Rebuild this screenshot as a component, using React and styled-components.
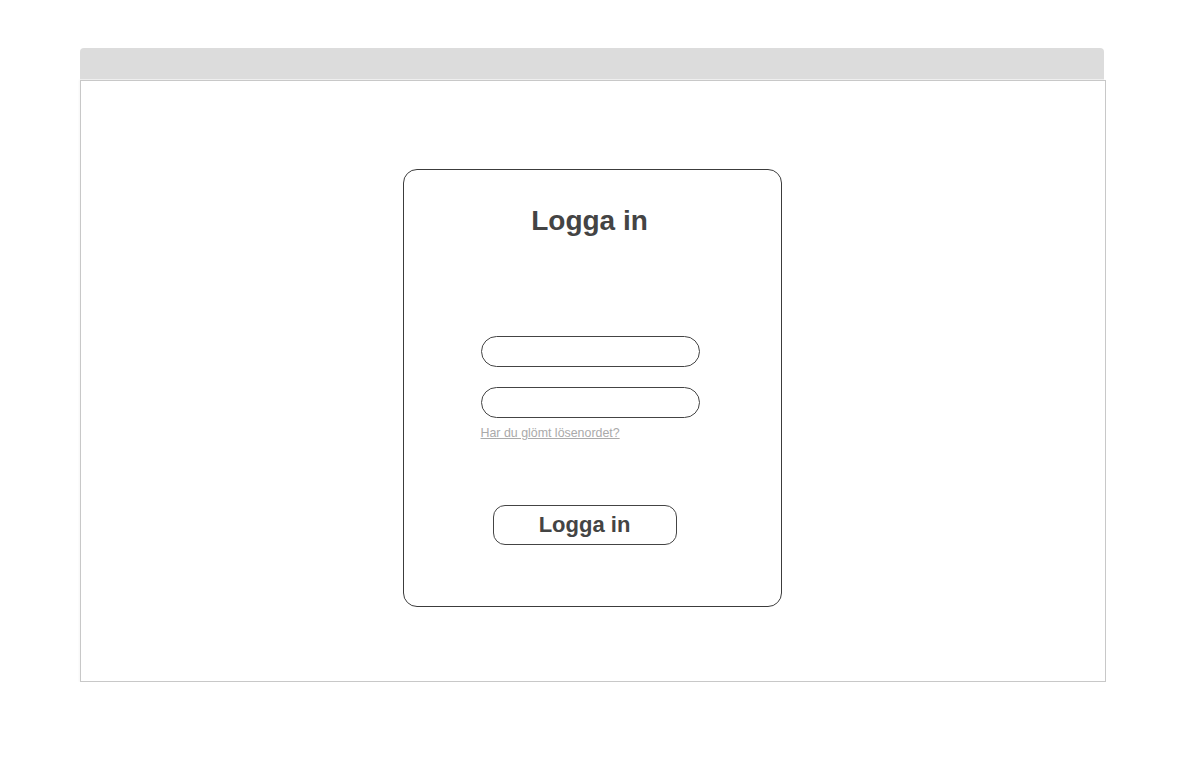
import styled, { createGlobalStyle } from "styled-components";

const GlobalStyle = createGlobalStyle`
  body {
    margin: 0;
    background: #ffffff;
    font-family: "Liberation Sans", Arial, sans-serif;
  }
`;

const Page = styled.div`
  padding: 48px 0 0 80px;
`;

// grey browser-like bar above the frame
const TopBar = styled.div`
  width: 1024px;
  height: 31px;
  background-color: #dcdcdc;
  border-radius: 4px 4px 0 0;
  border-bottom: 1px solid #f2f2f2;
`;

const Frame = styled.div`
  width: 1024px;
  height: 512px;
  border: 1px solid #c8c8c8;
  box-shadow: -1px 0 2px rgba(0, 0, 0, 0.04);
  display: flex;
  justify-content: center;
  align-items: flex-start;
  padding-top: 88px;
`;

const Card = styled.div`
  width: 377px;
  height: 401px;
  margin-right: 2px;
  border: 1px solid #3c3c3c;
  border-radius: 14px;
  display: flex;
  flex-direction: column;
  align-items: center;
  padding-top: 35px;
`;

const Title = styled.h1`
  margin: 0 5px 0 0;
  font-size: 28px;
  line-height: 32px;
  font-weight: bold;
  color: #444444;
`;

const Form = styled.div`
  width: 219px;
  margin: 99px 4px 0 0;
  display: flex;
  flex-direction: column;
`;

const Input = styled.input`
  box-sizing: border-box;
  width: 219px;
  height: 31px;
  margin: ${(p) => (p.$first ? "0" : "20px")} 0 0 0;
  padding: 0 12px;
  border: 1px solid #444444;
  border-radius: 16px;
  background: #ffffff;
  outline: none;
  font-family: inherit;
  font-size: 13px;
`;

const ForgotLink = styled.a`
  margin-top: 8px;
  font-size: 12.4px;
  line-height: 14px;
  color: #aaaaaa;
  text-decoration: underline;
  cursor: pointer;
`;

const Button = styled.button`
  box-sizing: border-box;
  width: 184px;
  height: 40px;
  margin: 65px 15px 0 0;
  border: 1px solid #444444;
  border-radius: 12px;
  background: #ffffff;
  font-family: inherit;
  font-size: 22px;
  font-weight: bold;
  color: #444444;
  cursor: pointer;
`;

const App = () => {
  return (
    <>
      <GlobalStyle />
      <Page>
        <TopBar />
        <Frame>
          <Card>
            <Title>Logga in</Title>
            <Form>
              <Input $first type="text" />
              <Input type="password" />
              <ForgotLink>Har du glömt lösenordet?</ForgotLink>
            </Form>
            <Button>Logga in</Button>
          </Card>
        </Frame>
      </Page>
    </>
  );
};

export default App;
